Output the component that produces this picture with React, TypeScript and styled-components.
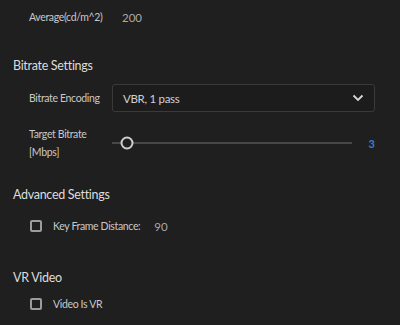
import React from 'react';
import styled, { createGlobalStyle } from 'styled-components';

const GlobalStyle = createGlobalStyle`
  html, body {
    margin: 0;
    padding: 0;
    background: #1f1f1f;
  }
`;

const Panel = styled.div`
  width: 400px;
  height: 325px;
  box-sizing: border-box;
  overflow: hidden;
  padding: 5px 25px 0 13px;
  font-family: Lato, 'Open Sans', sans-serif;
  background: #1f1f1f;
  color: #c4c4c4;
  display: flex;
  flex-direction: column;
`;

const Heading = styled.div<{ $top: number }>`
  margin-top: ${(p) => p.$top}px;
  height: 20px;
  line-height: 20px;
  font-size: 12.5px;
  letter-spacing: -0.3px;
  color: #dcdcdc;
`;

const Row = styled.div<{ $top?: number; $height?: number }>`
  margin-top: ${(p) => p.$top ?? 0}px;
  height: ${(p) => p.$height ?? 24}px;
  padding-left: 16px;
  display: flex;
  align-items: center;
  font-size: 10.5px;
  letter-spacing: -0.35px;
`;

const Label = styled.div<{ $auto?: boolean }>`
  width: ${(p) => (p.$auto ? 'auto' : '83px')};
  flex-shrink: 0;
  line-height: 18px;
  color: #c8c8c8;
`;

const Value = styled.span<{ $gap?: number }>`
  margin-left: ${(p) => p.$gap ?? 0}px;
  color: #a9a9a9;
  font-size: 11.5px;
  letter-spacing: 0;
`;

const Select = styled.div`
  flex: 1;
  height: 28px;
  box-sizing: border-box;
  border: 1px solid #3a3a3a;
  border-radius: 3px;
  background: #1c1c1c;
  display: flex;
  align-items: center;
  justify-content: space-between;
  padding: 0 10px 0 10px;
  font-size: 11.5px;
  letter-spacing: -0.3px;
  color: #d0d0d0;
`;

const Track = styled.div`
  flex: 1;
  height: 2px;
  background: #474747;
  position: relative;
`;

const Thumb = styled.div`
  position: absolute;
  top: 50%;
  width: 13px;
  height: 13px;
  box-sizing: border-box;
  border: 2px solid #cfcfcf;
  border-radius: 50%;
  background: #1f1f1f;
  transform: translate(-50%, -50%);
`;

const SliderValue = styled.span`
  width: 23px;
  text-align: right;
  color: #3b7bd6;
  font-size: 11px;
  font-weight: 700;
  letter-spacing: 0;
`;

const Check = styled.span`
  width: 12px;
  height: 12px;
  box-sizing: border-box;
  border: 2px solid #9c9c9c;
  border-radius: 2px;
  margin-left: 1px;
  margin-right: 11px;
  flex-shrink: 0;
`;

const Chevron = () => (
  <svg width="12" height="8" viewBox="0 0 12 8">
    <path d="M1.5 1.5 L6 6 L10.5 1.5" fill="none" stroke="#d8d8d8" strokeWidth="1.8" />
  </svg>
);

const App: React.FC = () => {
  const bitrate = 3;
  const min = 1;
  const max = 33;
  const pct = ((bitrate - min) / (max - min)) * 100;

  return (
    <>
      <GlobalStyle />
      <Panel>
        <Row>
          <Label>Average(cd/m^2)</Label>
          <Value $gap={10}>200</Value>
        </Row>

        <Heading $top={27}>Bitrate Settings</Heading>
        <Row $top={8} $height={28}>
          <Label>Bitrate Encoding</Label>
          <Select>
            <span>VBR, 1 pass</span>
            <Chevron />
          </Select>
        </Row>
        <Row $top={13} $height={36}>
          <Label>
            Target Bitrate
            <br />
            [Mbps]
          </Label>
          <Track>
            <Thumb style={{ left: `${pct}%` }} />
          </Track>
          <SliderValue>{bitrate}</SliderValue>
        </Row>

        <Heading $top={24}>Advanced Settings</Heading>
        <Row $top={11} $height={20}>
          <Check />
          <Label $auto>Key Frame Distance:</Label>
          <Value $gap={14}>90</Value>
        </Row>

        <Heading $top={32}>VR Video</Heading>
        <Row $top={6} $height={20}>
          <Check />
          <Label $auto>Video Is VR</Label>
        </Row>
      </Panel>
    </>
  );
};

export default App;
